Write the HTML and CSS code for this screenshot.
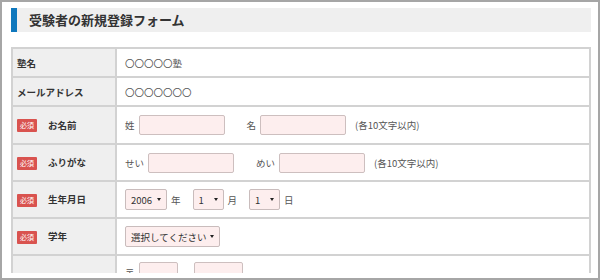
FILE: index.html
```html
<!doctype html>
<html lang="ja">
<head>
<meta charset="utf-8">
<title>受験者の新規登録フォーム</title>
<link rel="stylesheet" href="styles.css">
</head>
<body>
<div class="frame">
	<div class="page">
		<h2 class="title">受験者の新規登録フォーム</h2>
		<table class="form">
			<tr class="row-s">
				<th>塾名</th>
				<td class="val">〇〇〇〇〇塾</td>
			</tr>
			<tr class="row-s">
				<th>メールアドレス</th>
				<td class="val">〇〇〇〇〇〇〇</td>
			</tr>
			<tr class="row-first">
				<th><span class="req">必須</span>お名前</th>
				<td>
					<div class="field">
						<label>姓</label><input class="txt" type="text">
						<label class="next">名</label><input class="txt" type="text">
						<span class="note">(各10文字以内)</span>
					</div>
				</td>
			</tr>
			<tr>
				<th><span class="req">必須</span>ふりがな</th>
				<td>
					<div class="field">
						<label>せい</label><input class="txt" type="text">
						<label class="next">めい</label><input class="txt" type="text">
						<span class="note">(各10文字以内)</span>
					</div>
				</td>
			</tr>
			<tr>
				<th><span class="req">必須</span>生年月日</th>
				<td>
					<div class="field">
						<span class="sel sel-year"><select><option>2006</option></select></span><span class="unit">年</span>
						<span class="sel sel-day"><select><option>1</option></select></span><span class="unit">月</span>
						<span class="sel sel-day"><select><option>1</option></select></span><span class="unit">日</span>
					</div>
				</td>
			</tr>
			<tr>
				<th><span class="req">必須</span>学年</th>
				<td>
					<div class="field">
						<span class="sel sel-grade"><select><option>選択してください</option></select></span>
					</div>
				</td>
			</tr>
			<tr class="row-addr">
				<th></th>
				<td>
					<div class="field">
						<label>〒</label><input class="txt zip1" type="text">
						<span class="dash"></span><input class="txt zip2" type="text">
					</div>
				</td>
			</tr>
		</table>
	</div>
</div>
</body>
</html>
```

FILE: styles.css
```css
body{
	margin: 0;
	background: #fff;
	font-family: "Noto Sans CJK JP", sans-serif;
	color: #333;
}
.frame{
	width: 600px;
	height: 280px;
	box-sizing: border-box;
	border: 2px solid #a6a6a6;
	padding: 6px 7px 5px 9px;
}
.page{
	height: 100%;
	overflow: hidden;
}
.title{
	margin: 0;
	height: 24px;
	line-height: 24px;
	background: #efefef;
	border-left: 6px solid #0f78bd;
	padding-left: 12px;
	font-size: 13px;
	font-weight: bold;
	color: #333;
}
.form{
	margin-top: 15px;
	width: 100%;
	border-collapse: collapse;
	font-size: 9.5px;
}
.form th,
.form td{
	border: 2px solid #d2d2d2;
	height: 35px;
	padding: 0 8px;
	vertical-align: middle;
}
.form th{
	width: 90px;
	padding-left: 4px;
	background: #efefef;
	text-align: left;
	font-weight: bold;
	white-space: nowrap;
}
.row-s th,
.row-s td{
	height: 27px;
}
.row-first th,
.row-first td{
	height: 36px;
}
.val{
	color: #555;
}
.req{
	display: inline-block;
	width: 20px;
	height: 13px;
	line-height: 13px;
	margin-right: 11px;
	background: #d9534f;
	border-radius: 1px;
	color: #fff;
	font-size: 7px;
	font-weight: normal;
	text-align: center;
	vertical-align: middle;
}
.field{
	display: flex;
	align-items: center;
	color: #555;
}
.txt{
	width: 86px;
	height: 20px;
	box-sizing: border-box;
	margin: 0 0 0 4px;
	padding: 0 4px;
	border: 1px solid #cdbfbf;
	border-radius: 2px;
	background: #fdeeee;
}
.next{
	margin-left: 22px;
}
.note{
	margin-left: 9px;
}
.sel{
	position: relative;
	display: inline-flex;
	align-items: center;
	height: 21px;
	box-sizing: border-box;
	border: 1px solid #c9bcbc;
	border-radius: 2px;
	background: #fdeeee;
}
.sel select{
	appearance: none;
	-webkit-appearance: none;
	border: none;
	background: transparent;
	height: 100%;
	width: 100%;
	padding: 0 0 0 5px;
	font-family: inherit;
	font-size: 9.5px;
	color: #333;
	outline: none;
}
.sel:after{
	content: "";
	position: absolute;
	right: 5px;
	top: 8px;
	border-left: 2px solid transparent;
	border-right: 2px solid transparent;
	border-top: 3px solid #222;
	pointer-events: none;
}
.sel-year{
	width: 42px;
}
.sel-day{
	width: 31px;
}
.sel-grade{
	width: 95px;
}
.unit{
	margin: 0 12px 0 4px;
}
.row-addr td{
	vertical-align: top;
	padding-top: 6px;
	padding-bottom: 30px;
}
.zip1{
	width: 39px;
}
.dash{
	width: 16px;
}
.zip2{
	width: 49px;
	margin-left: 0;
}
```
